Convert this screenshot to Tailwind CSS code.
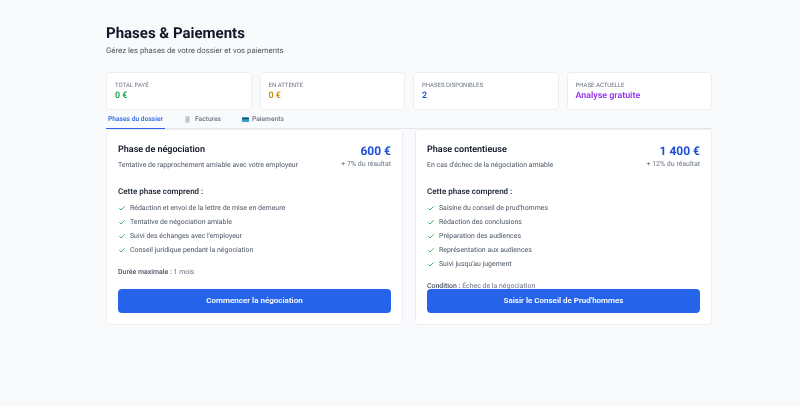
<!DOCTYPE html>
<html lang="fr">
<head>
  <meta charset="UTF-8" />
  <title>Phases & Paiements</title>
  <script src="https://cdn.jsdelivr.net/npm/@tailwindcss/browser@4"></script>
</head>
<body class="bg-[#f9fafb] h-[407px] overflow-hidden font-['Roboto',sans-serif] [text-rendering:geometricPrecision] text-gray-900">
  <div class="w-[606px] ml-[106px] pt-[23px] [will-change:transform]">

    <!-- En-tête -->
    <h1 class="text-[15px] leading-[20px] font-bold text-[#111827]">Phases &amp; Paiements</h1>
    <p class="text-[7.8px] leading-[12px] mt-[2px] text-[#4b5563]">Gérez les phases de votre dossier et vos paiements</p>

    <!-- Statistiques -->
    <div class="grid grid-cols-4 gap-[8px] mt-[15px]">
      <div class="h-[38px] bg-white rounded-[4px] border border-[#eceef2] pl-[8px] pt-[8px]">
        <div class="text-[6px] leading-[9px] text-[#6b7280] uppercase">Total payé</div>
        <div class="text-[8.9px] leading-[13px] font-semibold text-[#16a34a]">0 €</div>
      </div>
      <div class="h-[38px] bg-white rounded-[4px] border border-[#eceef2] pl-[8px] pt-[8px]">
        <div class="text-[6px] leading-[9px] text-[#6b7280] uppercase">En attente</div>
        <div class="text-[8.9px] leading-[13px] font-semibold text-[#ca8a04]">0 €</div>
      </div>
      <div class="h-[38px] bg-white rounded-[4px] border border-[#eceef2] pl-[8px] pt-[8px]">
        <div class="text-[6px] leading-[9px] text-[#6b7280] uppercase">Phases disponibles</div>
        <div class="text-[8.9px] leading-[13px] font-semibold text-[#1d4ed8]">2</div>
      </div>
      <div class="h-[38px] bg-white rounded-[4px] border border-[#eceef2] pl-[8px] pt-[8px]">
        <div class="text-[6px] leading-[9px] text-[#6b7280] uppercase">Phase actuelle</div>
        <div class="text-[8.9px] leading-[13px] font-semibold text-[#9333ea]">Analyse gratuite</div>
      </div>
    </div>

    <!-- Onglets -->
    <div class="flex h-[18px] mt-[1px] border-b border-[#e5e7eb] text-[6.7px] font-medium whitespace-nowrap">
      <div class="w-[59px] h-[18px] pl-[2px] pt-[3px] leading-[11px] text-[#2563eb] border-b-[1.5px] border-[#2563eb]">Phases du dossier</div>
      <div class="flex items-center h-[17px] gap-[4px] ml-[19px] pb-[1px] text-[#6b7280]">
        <svg width="7" height="7" viewBox="0 0 7 7"><rect x="1" y="0" width="5" height="7" fill="#d8d8e2"/><path d="M2 2h3M2 3.5h3M2 5h3" stroke="#a9a9b8" stroke-width=".6"/></svg>
        <span>Factures</span>
      </div>
      <div class="flex items-center h-[17px] gap-[3px] ml-[21px] pb-[1px] text-[#6b7280]">
        <svg width="7" height="5" viewBox="0 0 7 5"><rect width="7" height="5" rx=".5" fill="#3b9ec9"/><rect y="1" width="7" height="1.3" fill="#1f4e79"/></svg>
        <span>Paiements</span>
      </div>
    </div>

    <!-- Phases -->
    <div class="grid grid-cols-2 gap-[12px]">

      <div class="h-[196px] bg-white rounded-[4px] border border-[#eceef2] px-[11px] pt-[13px] flex flex-col">
        <div class="flex justify-between">
          <div>
            <h2 class="text-[9px] leading-[14px] font-semibold text-[#111827]">Phase de négociation</h2>
            <p class="text-[6.95px] leading-[10px] mt-[3px] text-[#4b5563]">Tentative de rapprochement amiable avec votre employeur</p>
          </div>
          <div class="text-right">
            <div class="text-[12px] leading-[16px] font-bold text-[#1d4ed8]">600 €</div>
            <div class="text-[7px] leading-[10px] text-[#6b7280]">+ 7% du résultat</div>
          </div>
        </div>
        <h3 class="text-[8px] leading-[12px] mt-[16px] font-semibold text-[#1f2937]">Cette phase comprend :</h3>
        <ul class="mt-[3px] text-[6.95px] text-[#4b5563]">
          <li class="flex items-center h-[14px]"><svg class="w-[8px] h-[8px] mr-[4px] text-[#16a34a]" viewBox="0 0 24 24" fill="none" stroke="currentColor" stroke-width="2.5"><path d="M4 13l5 5L20 7"/></svg>Rédaction et envoi de la lettre de mise en demeure</li>
          <li class="flex items-center h-[14px]"><svg class="w-[8px] h-[8px] mr-[4px] text-[#16a34a]" viewBox="0 0 24 24" fill="none" stroke="currentColor" stroke-width="2.5"><path d="M4 13l5 5L20 7"/></svg>Tentative de négociation amiable</li>
          <li class="flex items-center h-[14px]"><svg class="w-[8px] h-[8px] mr-[4px] text-[#16a34a]" viewBox="0 0 24 24" fill="none" stroke="currentColor" stroke-width="2.5"><path d="M4 13l5 5L20 7"/></svg>Suivi des échanges avec l'employeur</li>
          <li class="flex items-center h-[14px]"><svg class="w-[8px] h-[8px] mr-[4px] text-[#16a34a]" viewBox="0 0 24 24" fill="none" stroke="currentColor" stroke-width="2.5"><path d="M4 13l5 5L20 7"/></svg>Conseil juridique pendant la négociation</li>
        </ul>
        <p class="text-[6.95px] leading-[10px] mt-[10px] text-[#6b7280]"><span class="font-medium text-[#4b5563]">Durée maximale :</span> 1 mois</p>
        <button class="h-[24px] mt-[12px] bg-[#2563eb] rounded-[4px] text-white text-[8px] font-semibold">Commencer la négociation</button>
      </div>

      <div class="h-[196px] bg-white rounded-[4px] border border-[#eceef2] px-[11px] pt-[13px] flex flex-col">
        <div class="flex justify-between">
          <div>
            <h2 class="text-[9px] leading-[14px] font-semibold text-[#111827]">Phase contentieuse</h2>
            <p class="text-[6.95px] leading-[10px] mt-[3px] text-[#4b5563]">En cas d'échec de la négociation amiable</p>
          </div>
          <div class="text-right">
            <div class="text-[12px] leading-[16px] font-bold text-[#1d4ed8]">1 400 €</div>
            <div class="text-[7px] leading-[10px] text-[#6b7280]">+ 12% du résultat</div>
          </div>
        </div>
        <h3 class="text-[8px] leading-[12px] mt-[16px] font-semibold text-[#1f2937]">Cette phase comprend :</h3>
        <ul class="mt-[3px] text-[6.95px] text-[#4b5563]">
          <li class="flex items-center h-[14px]"><svg class="w-[8px] h-[8px] mr-[4px] text-[#16a34a]" viewBox="0 0 24 24" fill="none" stroke="currentColor" stroke-width="2.5"><path d="M4 13l5 5L20 7"/></svg>Saisine du conseil de prud'hommes</li>
          <li class="flex items-center h-[14px]"><svg class="w-[8px] h-[8px] mr-[4px] text-[#16a34a]" viewBox="0 0 24 24" fill="none" stroke="currentColor" stroke-width="2.5"><path d="M4 13l5 5L20 7"/></svg>Rédaction des conclusions</li>
          <li class="flex items-center h-[14px]"><svg class="w-[8px] h-[8px] mr-[4px] text-[#16a34a]" viewBox="0 0 24 24" fill="none" stroke="currentColor" stroke-width="2.5"><path d="M4 13l5 5L20 7"/></svg>Préparation des audiences</li>
          <li class="flex items-center h-[14px]"><svg class="w-[8px] h-[8px] mr-[4px] text-[#16a34a]" viewBox="0 0 24 24" fill="none" stroke="currentColor" stroke-width="2.5"><path d="M4 13l5 5L20 7"/></svg>Représentation aux audiences</li>
          <li class="flex items-center h-[14px]"><svg class="w-[8px] h-[8px] mr-[4px] text-[#16a34a]" viewBox="0 0 24 24" fill="none" stroke="currentColor" stroke-width="2.5"><path d="M4 13l5 5L20 7"/></svg>Suivi jusqu'au jugement</li>
        </ul>
        <p class="text-[6.95px] leading-[10px] mt-[10px] text-[#6b7280]"><span class="font-medium text-[#4b5563]">Condition :</span> Échec de la négociation</p>
        <button class="h-[24px] -mt-[2px] bg-[#2563eb] rounded-[4px] text-white text-[8px] font-semibold">Saisir le Conseil de Prud'hommes</button>
      </div>

    </div>
  </div>
</body>
</html>
